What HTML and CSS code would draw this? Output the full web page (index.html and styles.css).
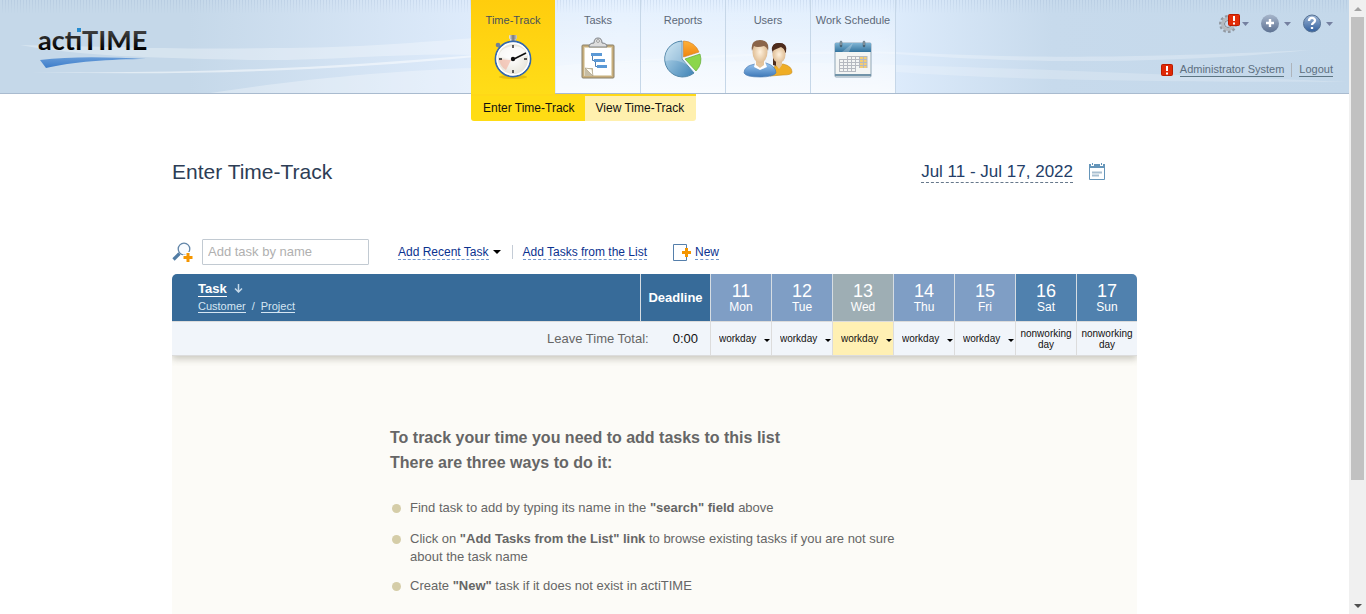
FILE: index.html
```html
<!DOCTYPE html>
<html lang="en">
<head>
<meta charset="utf-8">
<title>actiTIME - Enter Time-Track</title>
<link rel="stylesheet" href="styles.css">
</head>
<body>
<div class="page">
  <header class="header">
    <svg class="waves" viewBox="0 0 1349 93" preserveAspectRatio="none" aria-hidden="true">
      <path d="M20 45 C90 46 180 50 270 48 C360 48 420 42 475 38 L475 55 C410 52 330 61 250 60 C150 58 80 56 20 45Z" fill="#fff" opacity=".3"/>
      <path d="M30 72 C180 74 330 68 475 55 L475 57 C330 71 180 76 30 72Z" fill="#fff" opacity=".5"/>
      <path d="M210 93 C300 79 400 70 475 68 L475 93Z" fill="#fff" opacity=".3"/>
      <path d="M556 66 C700 55 800 50 896 52 C1000 57 1100 60 1310 50 C1150 66 1000 62 896 54 C800 52 700 58 556 66Z" fill="#fff" opacity=".25"/>
      <path d="M556 66 C700 55 960 66 1349 82 C1100 82 980 78 896 72 L896 93 L556 93Z" fill="#fff" opacity=".2"/>
    </svg>
    <a class="logo" href="#" aria-label="actiTIME">
      <svg width="116" height="50" viewBox="0 0 116 50">
        <defs>
          <linearGradient id="ink" x1="0" y1="0" x2="0" y2="1"><stop offset=".2" stop-color="#444"/><stop offset=".8" stop-color="#000"/></linearGradient>
          <linearGradient id="swoosh" x1="0" y1="0" x2="0" y2="1"><stop offset="0" stop-color="#669bd8"/><stop offset="1" stop-color="#3d7dca"/></linearGradient>
        </defs>
        <text class="logo-text" x="2" y="28" fill="url(#ink)">actıTIME</text>
        <rect x="41" y="6" width="4" height="4" fill="#248bd0"/>
        <path d="M4 38 C35 34 75 35 110 37 C75 37 35 40 10 46Z" fill="url(#swoosh)"/>
      </svg>
    </a>
    <nav class="nav">
      <a class="tab active" href="#"><span>Time-Track</span>
        <svg width="42" height="48" viewBox="0 0 42 48">
          <defs><linearGradient id="steel" x1="0" y1="0" x2="1" y2="0"><stop offset="0" stop-color="#eee"/><stop offset=".5" stop-color="#777"/><stop offset="1" stop-color="#ccc"/></linearGradient>
          <radialGradient id="dial"><stop offset="0" stop-color="#fff"/><stop offset="1" stop-color="#e5e2d7"/></radialGradient></defs>
          <ellipse cx="21" cy="43" rx="14" ry="2" fill="#b68a00" opacity=".35"/>
          <path d="M18 4 h6 v5 h-6z" fill="url(#steel)"/><rect x="17" y="1" width="8" height="4" rx="1" fill="url(#steel)"/>
          <circle cx="6" cy="11" r="2.300" fill="#718096"/><path d="M6 12 L11 16" stroke="#718096" stroke-width="2"/>
          <circle cx="21" cy="25" r="17.500" fill="url(#dial)" stroke="#3569ad" stroke-width="1.800"/>
          <circle cx="21" cy="25" r="15.900" fill="none" stroke="#fff" stroke-width="1.600"/>
          <path d="M19 26 L7 25 A14 14 0 0 0 14 36Z" fill="#f3b09d" opacity=".6"/>
          <path d="M7 23 C7 9 35 9 35 22 L21 25Z" fill="#fff" opacity=".7"/>
          <path d="M21 11v3M21 36v3M7 25h3M32 25h3" stroke="#222" stroke-width="1.400"/>
          <path d="M20 26 L34 19" stroke="#111" stroke-width="1.800"/><circle cx="21" cy="25" r="2.200" fill="#111"/>
        </svg></a>
      <a class="tab" href="#"><span>Tasks</span>
        <svg width="42" height="48" viewBox="0 0 42 48">
          <rect x="5" y="11" width="32" height="33" rx="1" fill="#c8ae7c" stroke="#8a8068"/>
          <path d="M7.500 13.500h27v28h-27z" fill="#fff" stroke="#e2d8bd"/>
          <path d="M8 34 L16 34 L16 42 L8 42Z" fill="#c6bda5"/><path d="M8 34 L15 35 L16 42Z" fill="#fffdf4" stroke="#a5977a" stroke-width=".6"/>
          <path d="M12 13 Q12 9 17 9 Q17 4 21 4 Q25 4 25 9 Q30 9 30 13Z" fill="#ddd" stroke="#7c8085"/>
          <circle cx="21" cy="7" r="1.400" fill="#fff" stroke="#777" stroke-width=".7"/>
          <path d="M15.500 21v5.500h3v6h3" stroke="#527fb1" fill="none"/>
          <path d="M14 19h11v3H14zM17 25h11v3H17zM20 31h10v3H20z" fill="#5b99d6"/>
        </svg></a>
      <a class="tab" href="#"><span>Reports</span>
        <svg width="42" height="48" viewBox="0 0 42 48">
          <defs><linearGradient id="pie" x1="0" y1="0" x2="1" y2="1"><stop offset="0" stop-color="#c2e1f1"/><stop offset="1" stop-color="#3e82b5"/></linearGradient>
          <linearGradient id="orange" x1="0" y1="0" x2="0" y2="1"><stop offset="0" stop-color="#ffb138"/><stop offset="1" stop-color="#ee8510"/></linearGradient></defs>
          <path d="M20 25 L20 7 A18 18 0 1 0 32 39Z" fill="url(#pie)" stroke="#5488aa"/>
          <path d="M3 27 Q18 24 29 34 L20 25 L20 8 A17 17 0 0 0 3 27" fill="#fff" opacity=".25"/>
          <path d="M21.500 23 L21.500 7 A17 17 0 0 1 37 18Z" fill="url(#orange)" stroke="#d58428" stroke-width=".7"/>
          <path d="M23 25 L38 20 A17 17 0 0 1 34 37Z" fill="#8bd64b" stroke="#63aa37" stroke-width=".7"/>
        </svg></a>
      <a class="tab" href="#"><span>Users</span>
        <svg width="50" height="48" viewBox="0 0 50 48">
          <defs><linearGradient id="shirt" x1="0" y1="0" x2="0" y2="1"><stop offset="0" stop-color="#9cc8f2"/><stop offset="1" stop-color="#3d78b8"/></linearGradient>
          <radialGradient id="face"><stop offset="0" stop-color="#fff1dd"/><stop offset="1" stop-color="#dfbd94"/></radialGradient></defs>
          <path d="M30 20 Q27 9 36 9 Q45 9 43 18 L33 32 L30 31Z" fill="#4d2b1c"/>
          <path d="M27 42 Q28 33 33 32 L40 30 Q49 32 49 38 Q49 41 40 41Z" fill="#efad25" stroke="#c78915" stroke-width=".6"/>
          <path d="M33 26h6v5l-3 4-3-4z" fill="#e5c59d"/><ellipse cx="36" cy="20.500" rx="6.500" ry="8.500" fill="url(#face)"/>
          <path d="M29 17 Q28 9 36 9 Q44 9 43 18 Q41 14 38 13 Q33 15 29 17Z" fill="#4d2b1c"/>
          <path d="M1 39 Q1 32 12 30 L23 29 Q33 32 33 39 Q30 43 17 43 Q3 43 1 39Z" fill="url(#shirt)" stroke="#5280b5" stroke-width=".7"/>
          <path d="M12 29 L22 28 L24 33 L17 36 L11 33Z" fill="#fff"/><path d="M13 26h8v5l-4 3-4-3z" fill="#e5c59d"/>
          <ellipse cx="17" cy="18" rx="7.500" ry="11" fill="url(#face)"/>
          <path d="M9 17 Q7 6 17 6 Q27 6 25 17 Q24 13 21 12 Q14 14 11 12Z" fill="#8a6449"/>
        </svg></a>
      <a class="tab" href="#"><span>Work Schedule</span>
        <svg width="42" height="48" viewBox="0 0 42 48">
          <defs><linearGradient id="calhead" x1="0" y1="0" x2="0" y2="1"><stop offset="0" stop-color="#7fb4d4"/><stop offset="1" stop-color="#34749e"/></linearGradient></defs>
          <rect x="3" y="9" width="36" height="34" rx="1" fill="#f3f5f4" stroke="#8fa5b5"/>
          <path d="M3 9h36v9H3z" fill="url(#calhead)"/><path d="M3 40h36v2H3z" fill="#7294a9"/>
          <path d="M9 8v4M32 8v4" stroke="#496374" stroke-width="2.500" stroke-linecap="round"/><path d="M9 7v4M32 7v4" stroke="#ddd" stroke-width=".7"/>
          <path d="M27 22h8v12h-8z" fill="#f5cd71"/>
          <path d="M15 22.500h20M7 25.500h28M7 28.500h28M7 31.500h28M7 34.500h16M7 37.500h16M7.500 25v13M11.500 25v13M15.500 22v16M19.500 22v16M23.500 22v16M27.500 22v12M31.500 22v12M35 22v12" stroke="#b5b9c0" fill="none"/>
          <path d="M10 18 L21 9 L17 18Z" fill="#fff" opacity=".25"/>
        </svg></a>
      <div class="subnav"><a class="current" href="#">Enter Time-Track</a><a href="#">View Time-Track</a></div>
    </nav>
    <div class="account">
      <div class="tools">
        <button type="button" aria-label="Settings">
          <svg width="30" height="20" viewBox="0 0 30 20"><circle cx="9" cy="11" r="7.500" fill="none" stroke="#9299a2" stroke-width="3" stroke-dasharray="2.600 2"/><circle cx="9" cy="11" r="5.500" fill="#e3e7eb" stroke="#b3bac1" stroke-width="3"/><circle cx="9" cy="11" r="3.500" fill="#c5d8eb" stroke="#80868d"/><rect x="9.500" y="1.500" width="11" height="11" rx="1" fill="#e22c08" stroke="#bb1b00"/><path d="M15 3v5M15 9.500v2" stroke="#fff" stroke-width="2"/><path d="M23 9h7l-3.500 4z" fill="#7580a0"/></svg>
        </button>
        <button type="button" aria-label="Add">
          <svg width="30" height="20" viewBox="0 0 30 20"><defs><linearGradient id="ball" x1="0" y1="0" x2="0" y2="1"><stop offset="0" stop-color="#a7b6cb"/><stop offset="1" stop-color="#5d7292"/></linearGradient></defs><circle cx="9" cy="10.500" r="9" fill="url(#ball)"/><path d="M9 6v8M5 10h8" stroke="#fff" stroke-width="2.400"/><path d="M23 9h7l-3.500 4z" fill="#7580a0"/></svg>
        </button>
        <button type="button" aria-label="Help">
          <svg width="30" height="20" viewBox="0 0 30 20"><defs><linearGradient id="blueball" x1="0" y1="0" x2="0" y2="1"><stop offset="0" stop-color="#9eb6d5"/><stop offset="1" stop-color="#315f9d"/></linearGradient></defs><circle cx="9" cy="10.500" r="8.500" fill="url(#blueball)" stroke="#567294"/><path d="M6 8 C6 4 12 4 12 7.500 C12 10 9 9.500 9 12M9 14v2" fill="none" stroke="#fff" stroke-width="2.300"/><path d="M23 9h7l-3.500 4z" fill="#7580a0"/></svg>
        </button>
      </div>
      <div class="user">
        <svg width="12" height="12" viewBox="0 0 12 12" aria-hidden="true"><rect x=".5" y=".5" width="11" height="11" rx="1" fill="#e02806" stroke="#b91c00"/><path d="M6 2v5M6 8.500v2" stroke="#fff" stroke-width="2"/></svg>
        <a href="#">Administrator System</a><i></i><a href="#">Logout</a>
      </div>
    </div>
  </header>
  <main class="main">
    <div class="heading">
      <h1>Enter Time-Track</h1>
      <div class="period"><a href="#">Jul 11 - Jul 17, 2022</a>
        <button type="button" aria-label="Choose dates"><svg width="16" height="18" viewBox="0 0 16 18"><path d="M.5 2.500h15v14H.5z" fill="#fff" stroke="#6595b9"/><path d="M0 1h16v4H0z" fill="#6595b9"/><path d="M3.500 0v3M12.500 0v3" stroke="#fff" stroke-width="3"/><path d="M3.500 0v2M12.500 0v2" stroke="#6595b9"/><path d="M3 9.500h10M3 12.500h7" stroke="#a9bfd0" stroke-width="2"/></svg></button>
      </div>
    </div>
    <div class="toolbar">
      <svg class="search-icon" width="22" height="20" viewBox="0 0 22 20" aria-hidden="true"><circle cx="12" cy="7" r="5.800" fill="#f8fbfe" stroke="#6185a8" stroke-width="1.300"/><path d="M7.500 11.500L1.500 17.500" stroke="#527da5" stroke-width="3.200"/><path d="M16 10v10M11 15h10" stroke="#fff" stroke-width="5"/><path d="M16 11v9M11.500 15.500h9" stroke="#f59600" stroke-width="3"/></svg>
      <input class="search" type="text" placeholder="Add task by name" aria-label="Add task by name">
      <button type="button" class="recent"><span>Add Recent Task</span><i class="caret"></i></button>
      <a class="from-list" href="#"><span>Add Tasks from the List</span></a>
      <button type="button" class="new"><svg width="18" height="17" viewBox="0 0 18 17"><path d="M13.500 4V.5H.5v16h13V13" fill="none" stroke="#557fab"/><path d="M13.500 4v9M9 8.500h9" stroke="#f59600" stroke-width="3"/></svg><span>New</span></button>
    </div>
    <table class="grid">
      <colgroup><col><col class="c-deadline"><col class="c-day"><col class="c-day"><col class="c-day"><col class="c-day"><col class="c-day"><col class="c-day"><col class="c-day"></colgroup>
      <thead><tr>
        <th class="task"><div class="by-task"><a href="#">Task</a><svg width="9" height="9" viewBox="0 0 9 9"><path d="M4.500 0v7M1 4.500L4.500 8L8 4.500" fill="none" stroke="#c5d9e9" stroke-width="1.500"/></svg></div><div class="by-group"><a href="#">Customer</a><span>/</span><a href="#">Project</a></div></th>
        <th>Deadline</th>
        <th class="day"><b>11</b>Mon</th><th class="day"><b>12</b>Tue</th><th class="day today"><b>13</b>Wed</th><th class="day"><b>14</b>Thu</th><th class="day"><b>15</b>Fri</th><th class="day off"><b>16</b>Sat</th><th class="day off"><b>17</b>Sun</th>
      </tr></thead>
      <tbody><tr>
        <td colspan="2"><div class="total"><span>Leave Time Total:</span><output>0:00</output></div></td>
        <td><div class="pick"><select aria-label="Mon 11"><option>workday</option></select><i class="caret"></i></div></td>
        <td><div class="pick"><select aria-label="Tue 12"><option>workday</option></select><i class="caret"></i></div></td>
        <td class="today"><div class="pick"><select aria-label="Wed 13"><option>workday</option></select><i class="caret"></i></div></td>
        <td><div class="pick"><select aria-label="Thu 14"><option>workday</option></select><i class="caret"></i></div></td>
        <td><div class="pick"><select aria-label="Fri 15"><option>workday</option></select><i class="caret"></i></div></td>
        <td class="nonworking">nonworking day</td><td class="nonworking">nonworking day</td>
      </tr></tbody>
    </table>
    <section class="empty">
      <h2>To track your time you need to add tasks to this list<br>There are three ways to do it:</h2>
      <ul>
        <li>Find task to add by typing its name in the <b>"search" field</b> above</li>
        <li>Click on <b>"Add Tasks from the List" link</b> to browse existing tasks if you are not sure about the task name</li>
        <li>Create <b>"New"</b> task if it does not exist in actiTIME</li>
      </ul>
    </section>
  </main>
</div>
<div class="scrollbar" aria-hidden="true"><i class="up"></i><i class="thumb"></i><i class="down"></i></div>
</body>
</html>
```
FILE: styles.css
```css
* { box-sizing: border-box; }
body { margin: 0; height: 100vh; display: flex; overflow: hidden; background: #fff; font-family: "Liberation Sans", Arial, sans-serif; font-size: 13px; color: #666; }
button { border: 0; padding: 0; background: none; font: inherit; cursor: pointer; }
a { color: inherit; text-decoration: none; }
svg { display: block; }
.page { flex: 1; min-width: 0; overflow: hidden; }

.header { position: relative; display: grid; grid-template-columns: minmax(0, 1fr) 425px minmax(0, 1fr); height: 94px; padding-left: 18px; border-bottom: 1px solid #a9bbcf;
  background: linear-gradient(90deg, #c5d8e9 0, #c5d8e9 14%, #deebfb 35%, #e4f0fe 46%, #dfedfd 65%, #c7daec 78%, #c4d8ea 100%); }
.header::before { content: ""; position: absolute; inset: 0 0 auto; height: 14px; background: repeating-linear-gradient(90deg, transparent 0 2px, rgba(120, 150, 190, .16) 2px 3px); mask-image: linear-gradient(#000, transparent); }
.waves { position: absolute; inset: 0; width: 100%; height: 100%; }
.logo { position: relative; justify-self: start; padding: 22px 0 0 18px; }
.logo-text { font: bold 27px "Liberation Sans Narrow", Lato, sans-serif; }
.nav { position: relative; display: grid; grid-template-columns: repeat(5, 1fr); }
.tab { height: 93px; padding-top: 13px; display: flex; flex-direction: column; align-items: center; gap: 6px; border-right: 1px solid #c6d7e8; background: linear-gradient(rgba(255, 255, 255, 0), rgba(255, 255, 255, .7)); font-size: 11px; line-height: 15px; color: #5d6978; white-space: nowrap; }
.tab.active { height: 95px; margin-right: 1px; border-right: 0; background: linear-gradient(#ffcd0d, #ffdd18); color: #48505a; }
.subnav { position: absolute; left: 0; top: 94px; display: flex; font-size: 12px; line-height: 24px; color: #111; border-radius: 0 0 3px 3px; overflow: hidden; white-space: nowrap; }
.subnav a { padding: 0 12px 1px 11px; border-top: 2px solid #ffd817; background: #fff0ae; }
.subnav .current { padding: 0 10px 1px 12px; background: #ffdc14; }
.account { position: relative; display: flex; flex-direction: column; align-items: flex-end; gap: 30px; padding: 13px 16px 0 0; font-size: 11px; color: #5d6f80; }
.tools { display: flex; gap: 12px; }
.user { display: flex; align-items: center; gap: 7px; }
.user a { border-bottom: 1px solid #5d7583; line-height: 13px; }
.user i { width: 1px; height: 14px; background: #aeb4bb; }

.main { max-width: 1005px; margin: 0 auto; padding-right: 40px; }
.heading { display: flex; justify-content: space-between; align-items: flex-start; padding: 65px 32px 54px 0; color: #2d3d55; }
h1 { margin: 0; font-size: 21px; line-height: 26px; font-weight: normal; }
.period { display: flex; align-items: center; gap: 16px; padding-top: 2px; font-size: 17px; line-height: 21px; color: #243e68; }
.period a { border-bottom: 1px dashed #66788b; }
.toolbar { display: flex; align-items: center; height: 26px; font-size: 12px; line-height: 14px; color: #0b328f; white-space: nowrap; }
.toolbar span { border-bottom: 1px dashed #7296cb; }
.search-icon { margin-right: 8px; }
.search { width: 167px; height: 26px; padding: 0 5px 1px; border: 1px solid #c2cad2; border-radius: 1px; font: 13px "Liberation Sans", Arial, sans-serif; color: #333; }
.search::placeholder { color: #b0b0b0; }
.toolbar button { display: flex; align-items: center; color: inherit; }
.recent { margin-left: 29px; gap: 4px; }
.caret { width: 0; height: 0; border: solid transparent; border-width: 4px 4px 0; border-top-color: #000; }
.from-list { margin-left: 11px; padding-left: 10px; border-left: 1px solid #c4ccd6; }
.new { margin-left: 26px; gap: 4px; }

.grid { position: relative; width: 100%; margin-top: 9px; table-layout: fixed; border-collapse: separate; border-spacing: 0; box-shadow: 0 3px 7px rgba(110, 105, 85, .35); clip-path: inset(0 0 -10px); }
.c-deadline { width: 70px; }
.c-day { width: 61px; }
th { height: 47px; padding: 0; background: #376b99; color: #fff; font-size: 13px; border-left: 1px solid #d6dde3; }
th.task { text-align: left; padding: 0 26px 2px; border-left: 0; border-top-left-radius: 5px; }
th:last-child { border-top-right-radius: 5px; }
th a { border-bottom: 1px solid currentColor; }
.by-task { display: flex; align-items: center; gap: 7px; line-height: 15px; }
.by-group { display: flex; gap: 6px; margin-top: 3px; font-size: 11px; line-height: 12px; font-weight: normal; color: #d5e6f3; }
.day { background: #7f9ec5; font-size: 12px; line-height: 14px; font-weight: normal; }
.day b { display: block; font-size: 18px; line-height: 18px; font-weight: normal; }
.day.today { background: #9eaeb4; }
.day.off { background: #5081ae; }
td { height: 35px; padding: 0; border: solid #dcdcdc; border-width: 1px 0 1px 1px; background: #f1f5fa; }
td:first-child { border-left: 0; }
td.today { background: #fff0b3; }
.total { display: flex; justify-content: flex-end; gap: 24px; padding-right: 12px; }
.total output { color: #111; }
.pick { display: flex; align-items: center; padding: 0 1px 0 8px; }
.pick select { flex: 1; min-width: 0; appearance: none; padding: 0; border: 0; background: none; font: 10px "Liberation Sans", Arial, sans-serif; color: #111; }
.pick .caret { border-width: 3px 3px 0; margin-top: 3px; }
.nonworking { text-align: center; font-size: 10px; line-height: 11px; color: #111; }

.empty { min-height: 258px; padding: 69px 218px 19px; background: #fcfbf7; }
h2 { margin: 0; font-size: 16px; line-height: 25px; white-space: nowrap; }
ul { list-style: none; margin: 24px 0 0; padding: 0; display: flex; flex-direction: column; gap: 11px; }
li { position: relative; padding-left: 20px; line-height: 18px; }
li:nth-child(2) { margin-top: 2px; }
li::before { content: ""; position: absolute; left: 2px; top: 5px; width: 9px; height: 9px; border-radius: 50%; background: #d5cda8; }

.scrollbar { width: 17px; display: flex; flex-direction: column; align-items: center; padding: 7px 0 6px; background: #f0f0f0; }
.scrollbar .up { border: solid transparent; border-width: 0 4px 4px; border-bottom-color: #a3a3a3; }
.scrollbar .thumb { width: 13px; height: 77%; margin-top: 6px; background: #c1c1c1; }
.scrollbar .down { margin-top: auto; border: solid transparent; border-width: 4px 4px 0; border-top-color: #505050; }
```
